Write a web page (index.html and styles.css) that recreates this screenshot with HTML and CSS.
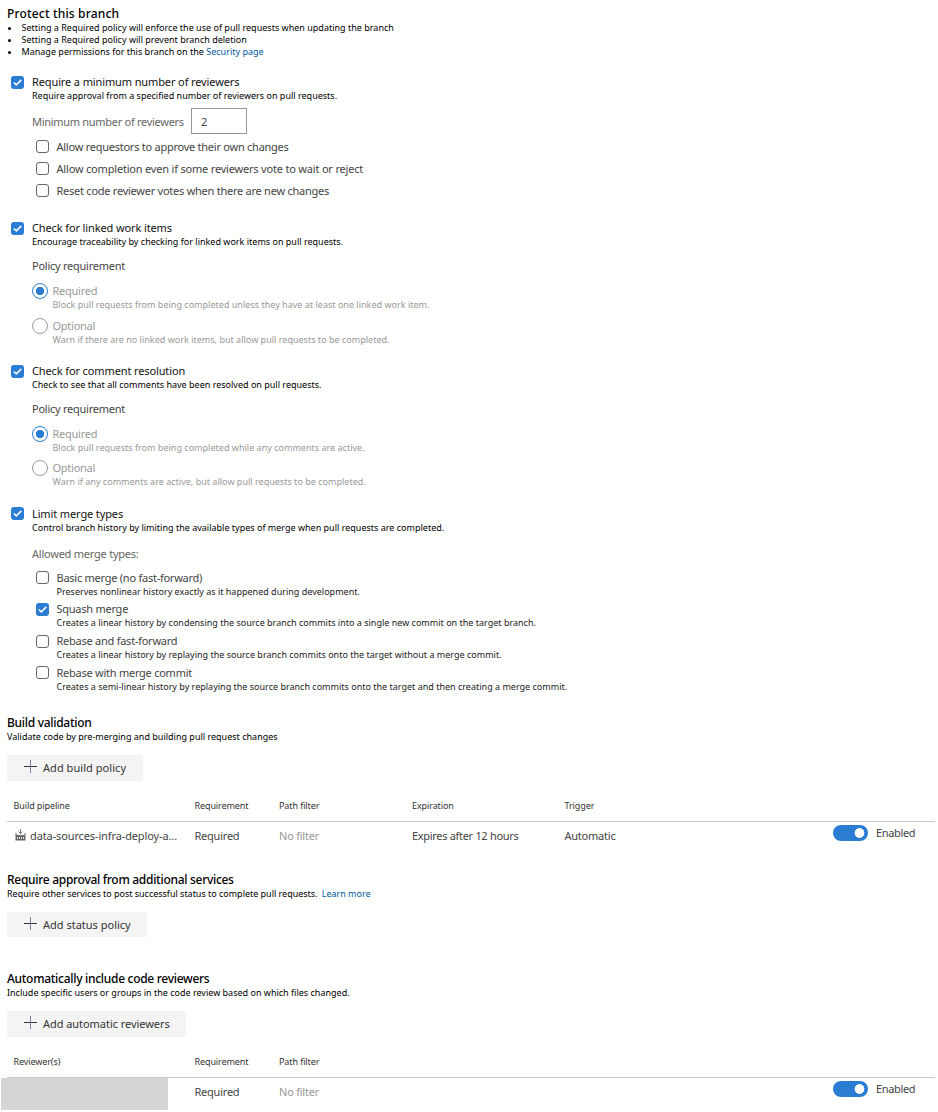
FILE: index.html
```html
<!DOCTYPE html>
<html lang="en">
<head>
<meta charset="utf-8">
<title>Branch policies</title>
<link rel="stylesheet" href="styles.css">
</head>
<body>
<svg class="defs" width="0" height="0" aria-hidden="true">
  <symbol id="check" viewBox="0 0 13 13"><path d="M2.8 6.5 5.3 8.9 10.3 3.9" fill="none" stroke="#fff" stroke-width="1.5"/></symbol>
  <symbol id="plus" viewBox="0 0 13 13"><path d="M0 6.5H13" stroke="#333" fill="none"/><path d="M6.5 0V13" stroke="#7f7fae" fill="none"/></symbol>
</svg>
<main class="page">
  <header class="intro">
    <h1 class="heading">Protect this branch</h1>
    <ul class="notes">
      <li>Setting a Required policy will enforce the use of pull requests when updating the branch</li>
      <li>Setting a Required policy will prevent branch deletion</li>
      <li>Manage permissions for this branch on the <a class="link">Security page</a></li>
    </ul>
  </header>

  <section class="policy reviewers">
    <span class="box on"><svg><use href="#check"/></svg></span>
    <div class="body">
      <h2 class="title">Require a minimum number of reviewers</h2>
      <p class="small">Require approval from a specified number of reviewers on pull requests.</p>
      <div class="field"><span class="text muted">Minimum number of reviewers</span><span class="input text">2</span></div>
      <div class="checks">
        <div class="check"><span class="box"></span><span class="text">Allow requestors to approve their own changes</span></div>
        <div class="check"><span class="box"></span><span class="text wide">Allow completion even if some reviewers vote to wait or reject</span></div>
        <div class="check"><span class="box"></span><span class="text">Reset code reviewer votes when there are new changes</span></div>
      </div>
    </div>
  </section>

  <section class="policy items">
    <span class="box on"><svg><use href="#check"/></svg></span>
    <div class="body">
      <h2 class="title">Check for linked work items</h2>
      <p class="small">Encourage traceability by checking for linked work items on pull requests.</p>
      <p class="text label">Policy requirement</p>
      <div class="radios">
        <div class="radio"><span class="dot on"></span><div><p class="text">Required</p><p class="small">Block pull requests from being completed unless they have at least one linked work item.</p></div></div>
        <div class="radio"><span class="dot"></span><div><p class="text">Optional</p><p class="small">Warn if there are no linked work items, but allow pull requests to be completed.</p></div></div>
      </div>
    </div>
  </section>

  <section class="policy comments">
    <span class="box on"><svg><use href="#check"/></svg></span>
    <div class="body">
      <h2 class="title">Check for comment resolution</h2>
      <p class="small">Check to see that all comments have been resolved on pull requests.</p>
      <p class="text label">Policy requirement</p>
      <div class="radios">
        <div class="radio"><span class="dot on"></span><div><p class="text">Required</p><p class="small">Block pull requests from being completed while any comments are active.</p></div></div>
        <div class="radio"><span class="dot"></span><div><p class="text">Optional</p><p class="small">Warn if any comments are active, but allow pull requests to be completed.</p></div></div>
      </div>
    </div>
  </section>

  <section class="policy merges">
    <span class="box on"><svg><use href="#check"/></svg></span>
    <div class="body">
      <h2 class="title">Limit merge types</h2>
      <p class="small">Control branch history by limiting the available types of merge when pull requests are completed.</p>
      <p class="text muted label">Allowed merge types:</p>
      <div class="types">
        <div class="type"><span class="box"></span><div><p class="text">Basic merge (no fast-forward)</p><p class="small">Preserves nonlinear history exactly as it happened during development.</p></div></div>
        <div class="type lower"><span class="box on"><svg><use href="#check"/></svg></span><div><p class="text">Squash merge</p><p class="small">Creates a linear history by condensing the source branch commits into a single new commit on the target branch.</p></div></div>
        <div class="type lower"><span class="box"></span><div><p class="text">Rebase and fast-forward</p><p class="small">Creates a linear history by replaying the source branch commits onto the target without a merge commit.</p></div></div>
        <div class="type"><span class="box"></span><div><p class="text">Rebase with merge commit</p><p class="small">Creates a semi-linear history by replaying the source branch commits onto the target and then creating a merge commit.</p></div></div>
      </div>
    </div>
  </section>

  <section class="group build">
    <h2 class="heading">Build validation</h2>
    <p class="small">Validate code by pre-merging and building pull request changes</p>
    <div class="button b1"><svg><use href="#plus"/></svg><span>Add build policy</span></div>
    <div class="grid head small"><span>Build pipeline</span><span>Requirement</span><span>Path filter</span><span>Expiration</span><span>Trigger</span></div>
    <div class="grid row text">
      <span class="pipe"><svg class="factory" viewBox="0 0 11 12"><path d="M5.5 0V4.5M3.5 2.5 5.5 4.5 7.5 2.5" fill="none" stroke="#666" stroke-width=".9"/><path d="M.5 4V11.5H10.5V4H9.5V6.5L7.5 5.5V6.5L5.5 5.5V6.5L3.5 5.5V6.5L1.5 5.5V4Z" fill="#666"/><path d="M2.5 8V10M4.5 8V10M6.5 8V10M8.5 8V10" stroke="#eee" stroke-width=".9"/></svg><span>data-sources-infra-deploy-a...</span></span>
      <span>Required</span><span class="faint">No filter</span><span class="expires">Expires after 12 hours</span><span>Automatic</span>
      <span class="state"><i class="toggle"></i>Enabled</span>
    </div>
  </section>

  <section class="group services">
    <h2 class="heading">Require approval from additional services</h2>
    <p class="small">Require other services to post successful status to complete pull requests. <a class="link more">Learn more</a></p>
    <div class="button b2"><svg><use href="#plus"/></svg><span>Add status policy</span></div>
  </section>

  <section class="group auto">
    <h2 class="heading">Automatically include code reviewers</h2>
    <p class="small">Include specific users or groups in the code review based on which files changed.</p>
    <div class="button b3"><svg><use href="#plus"/></svg><span>Add automatic reviewers</span></div>
    <div class="grid head small"><span>Reviewer(s)</span><span>Requirement</span><span>Path filter</span></div>
    <div class="grid row text">
      <span class="redacted"></span><span>Required</span><span class="faint">No filter</span><span></span><span></span>
      <span class="state"><i class="toggle"></i>Enabled</span>
    </div>
  </section>
</main>
</body>
</html>
```
FILE: styles.css
```css
* { box-sizing: border-box; margin: 0; padding: 0; }
body { background: #fff; color: #000; font-family: "Noto Sans", "Open Sans", sans-serif; }
.defs { display: block; height: 0; }
.page { width: 938px; height: 1112px; padding: 7px 3px 0 7px; white-space: nowrap; overflow: hidden; }

.heading { font-size: 12px; line-height: 14px; font-weight: 500; letter-spacing: -0.29px; }
.intro .heading { letter-spacing: 0.17px; }
.title { font-size: 11px; line-height: 14px; font-weight: 400; letter-spacing: -0.12px; color: #111; }
.text { font-size: 11px; line-height: 14px; letter-spacing: -0.25px; color: #444; }
.text.wide { letter-spacing: -0.19px; }
.small { font-size: 9px; line-height: 14px; letter-spacing: 0.005px; }
.muted { color: #666; }
.field .muted { letter-spacing: -0.29px; }
.faint { color: #999; }
.link { color: #005a9e; }
.more { margin-left: 2px; }

.notes { list-style: none; margin-top: 1px; font-size: 9px; line-height: 12px; letter-spacing: 0.01px; }
.notes li { display: flex; white-space: pre; }
.notes li::before { content: ""; width: 3px; height: 3px; margin: 5px 10.5px 0 1px; border-radius: 50%; background: #000; }

.policy { display: flex; gap: 8px; padding-left: 4px; }
.reviewers { margin-top: 17px; }
.items { margin-top: 19px; }
.comments { margin-top: 17px; }
.merges { margin-top: 18px; }

.box { flex: none; width: 13px; height: 13px; border: 1px solid #666; border-radius: 3px; background: #fff; }
.box.on { border: 0; background: #2b7cd3; }
.box svg { display: block; width: 13px; height: 13px; }
.reviewers > .box, .items > .box, .comments > .box { margin-top: 1px; }

.field { display: flex; align-items: center; width: 215px; height: 26px; margin-top: 5px; }
.field .muted { padding-top: 1px; }
.input { flex: none; width: 56px; height: 26px; margin-left: auto; padding-left: 9px; border: 1px solid #999; line-height: 26px; }
.checks { margin-top: 2px; padding-left: 4px; }
.check { display: flex; align-items: center; gap: 7.5px; height: 22px; }
.check .box { margin-bottom: 1px; }

.label { margin-top: 10px; }
.radios { display: grid; gap: 7px; margin-top: 11px; color: #999; }
.radios .text { color: #999; }
.comments .radios { gap: 6px; }
.radio { display: flex; gap: 4.5px; height: 28px; }
.radio .small { letter-spacing: 0.015px; }
.dot { flex: none; width: 16px; height: 16px; margin-top: -1px; border: 1px solid #999; border-radius: 50%; }
.dot.on { border-color: #2b7cd3; background: radial-gradient(circle, #2b7cd3 3.8px, #fff 4.5px); }

.merges .label { margin-top: 12px; letter-spacing: -0.23px; }
.types { display: grid; grid-template-rows: 31px 32px 32px 28px; margin-top: 10px; padding-left: 4px; color: #222; }
.type { display: flex; gap: 7.5px; }
.lower .box { margin-top: 1px; }

.build { margin-top: 22px; }
.button { display: flex; align-items: center; gap: 6px; height: 26px; margin-top: 11px; padding: 0 0 1px 17px; background: #f4f4f4; color: #333; font-size: 11px; }
.button svg { width: 13px; height: 13px; margin-top: -2px; }
.b1 { width: 136px; letter-spacing: 0.05px; }
.b2 { width: 140px; height: 25px; }
.b3 { width: 179px; letter-spacing: -0.05px; }
.grid { display: grid; grid-template-columns: 181px 84.5px 133px 152.5px 268.5px 1fr; padding-left: 6.5px; }
.head { height: 41px; padding-top: 18px; border-bottom: 1px solid #c8c8c8; letter-spacing: -0.1px; color: #333; }
.row { height: 51px; padding-top: 7px; letter-spacing: -0.23px; }
.row .faint { color: #999; }
.expires { letter-spacing: -0.31px; }
.pipe { display: flex; gap: 4px; padding-left: 1.5px; letter-spacing: -0.12px; }
.factory { width: 11px; height: 12px; }
.state { display: flex; align-items: center; gap: 8px; height: 16px; margin-top: -4px; letter-spacing: -0.35px; }
.toggle { width: 35px; height: 16px; border-radius: 8px; background: radial-gradient(circle at 26.5px 8px, #fff 4.5px, #2b7cd3 5.2px); }

.services { height: 99px; }
.services .small { letter-spacing: -0.02px; }
.auto .row { padding-top: 0; }
.auto .row > span { margin-top: 7px; }
.auto .row > .redacted { width: 167px; height: 32px; margin: 0 0 0 -12.5px; background: #d5d5d5; }
.auto .row > .state { margin-top: 3px; }
```
